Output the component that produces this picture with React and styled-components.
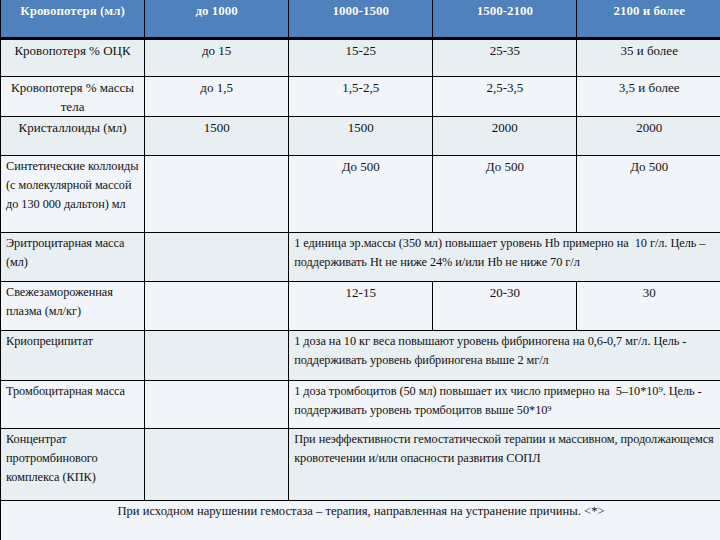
import styled, { createGlobalStyle } from 'styled-components';

const GlobalStyle = createGlobalStyle`
  html, body {
    margin: 0;
    padding: 0;
    background: #f1f5f9;
    overflow: hidden;
  }
`;

const Page = styled.div`
  width: 720px;
  height: 540px;
  overflow: hidden;
  background: #f1f5f9;
`;

const Table = styled.table`
  width: 721px;
  table-layout: fixed;
  border-collapse: collapse;
  font-family: "Liberation Serif", "Times New Roman", serif;
  font-size: 13px;
  line-height: 19px;
  color: #111;
`;

const Col = styled.col`
  width: 144px;
`;

const HeadRow = styled.tr`
  height: 38px;
  background: #4f81bd;
  border-bottom: 3px solid #000;
`;

const HeadCell = styled.th`
  border-left: 1px solid #000;
  padding: 1px 4px 0;
  vertical-align: top;
  text-align: center;
  color: #fff;
  font-weight: bold;
  font-size: 13px;
  text-shadow: 0 0 1px rgba(0, 0, 0, 0.25);
`;

const Row = styled.tr`
  height: ${props => props.$h}px;
  background: ${props => (props.$shade ? '#e8eff2' : '#f1f5f9')};
  border-top: 1px solid #000;
`;

const Cell = styled.td`
  border-left: 1px solid #000;
  padding: 1px 4px 0;
  vertical-align: top;
  text-align: center;
`;

// left aligned text cells use a slightly narrower setting
const TextCell = styled.td`
  border-left: 1px solid #000;
  padding: 1px 2px 0 5px;
  vertical-align: top;
  text-align: left;
  font-size: 12.3px;
  letter-spacing: -0.05px;
`;

const FootCell = styled.td`
  border-left: 1px solid #000;
  padding: 1px 4px 0;
  vertical-align: top;
  text-align: center;
  font-size: 12.6px;
`;

const headers = ['Кровопотеря (мл)', 'до 1000', '1000-1500', '1500-2100', '2100 и более'];

const App = () => {
  return (
    <Page>
      <GlobalStyle />
      <Table>
        <colgroup>
          <Col />
          <Col />
          <Col />
          <Col />
          <Col />
        </colgroup>
        <thead>
          <HeadRow>
            {headers.map(h => (
              <HeadCell key={h}>{h}</HeadCell>
            ))}
          </HeadRow>
        </thead>
        <tbody>
          <Row $h={38} $shade>
            <Cell>Кровопотеря % ОЦК</Cell>
            <Cell>до 15</Cell>
            <Cell>15-25</Cell>
            <Cell>25-35</Cell>
            <Cell>35 и более</Cell>
          </Row>
          <Row $h={38}>
            <Cell>Кровопотеря % массы тела</Cell>
            <Cell>до 1,5</Cell>
            <Cell>1,5-2,5</Cell>
            <Cell>2,5-3,5</Cell>
            <Cell>3,5 и более</Cell>
          </Row>
          <Row $h={39} $shade>
            <Cell>Кристаллоиды (мл)</Cell>
            <Cell>1500</Cell>
            <Cell>1500</Cell>
            <Cell>2000</Cell>
            <Cell>2000</Cell>
          </Row>
          <Row $h={77}>
            <TextCell>Синтетические коллоиды (с молекулярной массой до 130 000 дальтон) мл</TextCell>
            <Cell />
            <Cell>До 500</Cell>
            <Cell>До 500</Cell>
            <Cell>До 500</Cell>
          </Row>
          <Row $h={49} $shade>
            <TextCell>Эритроцитарная масса (мл)</TextCell>
            <Cell />
            <TextCell colSpan={3}>
              1 единица эр.массы (350 мл) повышает уровень Hb примерно на&nbsp; 10 г/л. Цель – поддерживать Ht не ниже 24% и/или Hb не ниже 70 г/л
            </TextCell>
          </Row>
          <Row $h={49}>
            <TextCell>Свежезамороженная плазма (мл/кг)</TextCell>
            <Cell />
            <Cell>12-15</Cell>
            <Cell>20-30</Cell>
            <Cell>30</Cell>
          </Row>
          <Row $h={50} $shade>
            <TextCell>Криопреципитат</TextCell>
            <Cell />
            <TextCell colSpan={3}>
              1 доза на 10 кг веса повышают уровень фибриногена на 0,6-0,7 мг/л. Цель - поддерживать уровень фибриногена выше 2 мг/л
            </TextCell>
          </Row>
          <Row $h={48}>
            <TextCell>Тромбоцитарная масса</TextCell>
            <Cell />
            <TextCell colSpan={3}>
              1 доза тромбоцитов (50 мл) повышает их число примерно на&nbsp; 5–10*10⁹. Цель - поддерживать уровень тромбоцитов выше 50*10⁹
            </TextCell>
          </Row>
          <Row $h={72} $shade>
            <TextCell>Концентрат протромбинового комплекса (КПК)</TextCell>
            <Cell />
            <TextCell colSpan={3}>
              При неэффективности гемостатической терапии и массивном, продолжающемся кровотечении и/или опасности развития СОПЛ
            </TextCell>
          </Row>
          <Row $h={60}>
            <FootCell colSpan={5}>
              При исходном нарушении гемостаза – терапия, направленная на устранение причины. &lt;*&gt;
            </FootCell>
          </Row>
        </tbody>
      </Table>
    </Page>
  );
};

export default App;
